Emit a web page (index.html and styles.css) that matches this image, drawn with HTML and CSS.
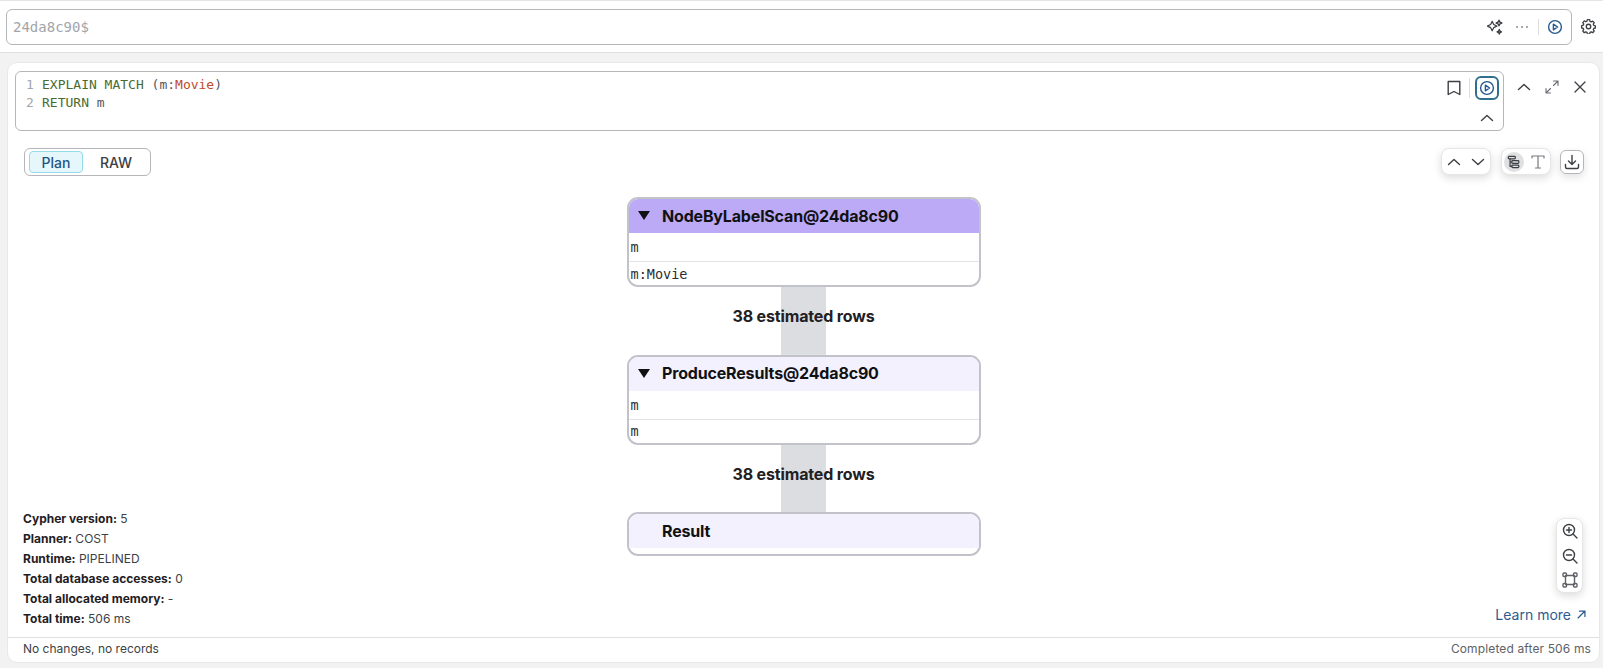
FILE: index.html
```html
<!DOCTYPE html>
<html lang="en">
<head>
<meta charset="utf-8">
<title>Query plan</title>
<link rel="stylesheet" href="styles.css">
</head>
<body>
<header class="topbar">
  <div class="prompt">
    <span class="prompt-text">24da8c90$</span>
    <div class="prompt-actions">
      <svg class="icon" viewBox="0 0 16 16"><path d="M6 4.500l1.800 3.700L11.500 10l-3.700 1.800L6 15.500l-1.800-3.700L.5 10l3.700-1.800z" transform="translate(0 -1.500) scale(.86)"/><path d="M12 1.200l.9 1.900 1.900.9-1.900.9-.9 1.900-.9-1.900-1.900-.9 1.900-.9z"/><path d="M12.300 10.600l.7 1.500 1.500.7-1.500.7-.7 1.500-.7-1.500-1.500-.7 1.500-.7z"/></svg>
      <svg class="icon dots" viewBox="0 0 16 16"><circle cx="3" cy="8" r=".8"/><circle cx="8" cy="8" r=".8"/><circle cx="13" cy="8" r=".8"/></svg>
      <span class="divider"></span>
      <svg class="icon run" viewBox="0 0 16 16"><circle cx="8" cy="8" r="6.400"/><path d="M6.400 5.200l4.200 2.800-4.200 2.800z"/></svg>
    </div>
  </div>
  <svg class="icon gear" viewBox="0 0 16 16"><path d="M6.800 1.200h2.400l.4 1.800 1.300.6 1.600-.9 1.600 1.800-1 1.500.5 1.300 1.700.5v2.300l-1.700.5-.5 1.300 1 1.500-1.600 1.700-1.600-.9-1.300.6-.4 1.800H6.800l-.4-1.800-1.300-.6-1.600.9-1.600-1.700 1-1.500-.5-1.300-1.700-.5V7.600l1.700-.5.5-1.300-1-1.500 1.600-1.800 1.600.9 1.300-.6z" transform="translate(0 -.5)"/><circle cx="8" cy="8" r="2.400"/></svg>
</header>

<main class="page">
  <section class="card">
    <div class="card-head">
      <div class="editor">
        <div class="code">
          <div class="code-line"><span class="ln">1</span><span class="kw">EXPLAIN MATCH</span> (m:<span class="label">Movie</span>)</div>
          <div class="code-line"><span class="ln">2</span><span class="kw">RETURN</span> m</div>
        </div>
        <div class="editor-actions">
          <div class="editor-top">
            <svg class="icon" viewBox="0 0 16 16"><path d="M2.200 1.500h11.600v13L8 11.500l-5.800 3z"/></svg>
            <span class="divider tall"></span>
            <span class="run-box"><svg class="icon run" viewBox="0 0 16 16"><circle cx="8" cy="8" r="6.400"/><path d="M6.400 5.200l4.200 2.800-4.200 2.800z"/></svg></span>
          </div>
          <svg class="icon chev" viewBox="0 0 16 16"><path d="M2.500 10.500L8 5.500l5.500 5"/></svg>
        </div>
      </div>
      <div class="card-actions">
        <svg class="icon chev" viewBox="0 0 16 16"><path d="M2.500 10.500L8 5.500l5.500 5"/></svg>
        <svg class="icon expand" viewBox="0 0 16 16"><path d="M2 14l4.500-4.500M9.500 6.500L14 2M9.500 2H14v4.500M2 9.500V14h4.500"/></svg>
        <svg class="icon close" viewBox="0 0 16 16"><path d="M3 3l10 10M13 3L3 13"/></svg>
      </div>
    </div>

    <div class="canvas">
      <div class="switch">
        <span class="tab tab-on">Plan</span>
        <span class="tab tab-off">RAW</span>
      </div>

      <div class="tools">
        <div class="tool-group">
          <svg class="icon chev" viewBox="0 0 16 16"><path d="M2.500 10.500L8 5.500l5.500 5"/></svg>
          <svg class="icon chev" viewBox="0 0 16 16"><path d="M2.500 5.500L8 10.500l5.500-5"/></svg>
        </div>
        <div class="tool-group tight">
          <span class="tool-on"><svg class="icon small" viewBox="0 0 16 16"><rect x="1.500" y="1.500" width="8" height="3" rx="1"/><rect x="5.500" y="6.500" width="8" height="3" rx="1"/><rect x="5.500" y="11.500" width="8" height="3" rx="1"/><path d="M3.500 4.500V8h2M3.500 8v5h2"/></svg></span>
          <svg class="icon text-icon" viewBox="0 0 16 16"><path d="M2 4V2h12v2M8 2v12M5.500 14h5"/></svg>
        </div>
        <span class="tool-btn"><svg class="icon" viewBox="0 0 16 16"><path d="M8 1.500v8.500M4.500 7L8 10.500 11.500 7M1.500 10.500v2.500a1.500 1.500 0 0 0 1.500 1.500h10a1.500 1.500 0 0 0 1.500-1.500v-2.500"/></svg></span>
      </div>

      <div class="graph">
        <article class="node">
          <div class="node-head head-strong"><span class="caret"></span>NodeByLabelScan@24da8c90</div>
          <div class="node-row first">m</div>
          <div class="node-row">m:Movie</div>
        </article>
        <div class="edge"><span>38 estimated rows</span></div>
        <article class="node">
          <div class="node-head"><span class="caret"></span>ProduceResults@24da8c90</div>
          <div class="node-row first">m</div>
          <div class="node-row">m</div>
        </article>
        <div class="edge"><span>38 estimated rows</span></div>
        <article class="node node-end">
          <div class="node-head"><span class="caret none"></span>Result</div>
        </article>
      </div>

      <dl class="stats">
        <div><dt>Cypher version:</dt> <dd>5</dd></div>
        <div><dt>Planner:</dt> <dd>COST</dd></div>
        <div><dt>Runtime:</dt> <dd>PIPELINED</dd></div>
        <div><dt>Total database accesses:</dt> <dd>0</dd></div>
        <div><dt>Total allocated memory:</dt> <dd>-</dd></div>
        <div><dt>Total time:</dt> <dd>506 ms</dd></div>
      </dl>

      <div class="zoom-tools">
        <svg class="icon" viewBox="0 0 16 16"><circle cx="7" cy="7" r="5.500"/><path d="M11 11l4 4M7 4.500v5M4.500 7h5"/></svg>
        <svg class="icon" viewBox="0 0 16 16"><circle cx="7" cy="7" r="5.500"/><path d="M11 11l4 4M4.500 7h5"/></svg>
        <svg class="icon fit" viewBox="0 0 16 16"><rect x="3.500" y="3.500" width="9" height="9" rx=".5"/><rect x="1" y="1" width="3.500" height="3.500" rx="1"/><rect x="11.500" y="1" width="3.500" height="3.500" rx="1"/><rect x="1" y="11.500" width="3.500" height="3.500" rx="1"/><rect x="11.500" y="11.500" width="3.500" height="3.500" rx="1"/></svg>
      </div>

      <a class="learn" href="#">Learn more <svg class="icon arrow" viewBox="0 0 16 16"><path d="M3 13L13 3M5 3h8v8"/></svg></a>
    </div>

    <footer class="status">
      <span>No changes, no records</span>
      <span class="status-right">Completed after 506 ms</span>
    </footer>
  </section>
</main>
</body>
</html>
```

FILE: styles.css
```css
* { box-sizing: border-box; }

html, body { height: 100%; }

body {
  margin: 0;
  display: flex;
  flex-direction: column;
  background: #f2f2f2;
  color: #1a1b1d;
  font-family: Inter, "Liberation Sans", sans-serif;
  overflow: hidden;
}

.icon {
  width: 16px;
  height: 16px;
  flex: none;
  fill: none;
  stroke: #3c3f44;
  stroke-width: 1.4;
  stroke-linejoin: round;
  stroke-linecap: round;
}

.icon.run { stroke: #24588f; }

.topbar {
  height: 53px;
  flex: none;
  display: flex;
  align-items: flex-start;
  gap: 9px;
  padding: 9px 7px 0 6px;
  background: #fff;
  border-top: 1px solid #e6e6e6;
  border-bottom: 1px solid #e0e0e0;
}

.prompt {
  flex: 1;
  height: 36px;
  margin-top: -1px;
  display: flex;
  align-items: center;
  justify-content: space-between;
  padding: 0 8px 0 6px;
  border: 1px solid #b5b6ba;
  border-radius: 6px;
}

.prompt-text {
  font: 14px "DejaVu Sans Mono", monospace;
  color: #a2a5aa;
}

.prompt-actions {
  display: flex;
  align-items: center;
}

.icon.dots {
  margin-left: 11px;
  fill: #3c3f44;
  stroke: none;
}

.divider {
  width: 1px;
  height: 16px;
  margin: 0 8px;
  background: #dcdde0;
}

.gear {
  width: 15px;
  height: 15px;
  margin-top: 9px;
}

.page {
  flex: 1;
  min-height: 0;
  padding: 9px 3px 5px 7px;
  display: flex;
}

.card {
  flex: 1;
  display: flex;
  flex-direction: column;
  background: #fff;
  border: 1px solid #e8e8e8;
  border-radius: 10px;
}

.card-head {
  display: flex;
  align-items: flex-start;
  padding: 8px 0 0 7px;
}

.editor {
  flex: 1;
  height: 60px;
  display: flex;
  justify-content: space-between;
  border: 1px solid #b5b6ba;
  border-radius: 6px;
  padding: 4px 4px 0 10px;
}

.code {
  font: 13px/18px "DejaVu Sans Mono", monospace;
  color: #55585d;
}

.ln {
  display: inline-block;
  width: 16px;
  color: #a2a5aa;
}

.kw { color: #4a6b2f; }

.label { color: #bd4a2a; }

.editor-actions {
  display: flex;
  flex-direction: column;
  align-items: flex-end;
  gap: 10px;
}

.editor-actions .chev { margin-right: 4px; }

.editor-top {
  display: flex;
  align-items: center;
}

.divider.tall {
  height: 20px;
  margin: 0 5px 0 7px;
}

.run-box {
  width: 24px;
  height: 24px;
  display: flex;
  align-items: center;
  justify-content: center;
  border: 2px solid #2f6f90;
  border-radius: 6px;
}

.card-actions {
  width: 95px;
  flex: none;
  display: flex;
  justify-content: space-between;
  padding: 8px 11px 0 12px;
}

.expand {
  stroke: #6b6e73;
  stroke-width: 1.1;
}

.close { stroke-width: 1.3; }

.canvas {
  flex: 1;
  position: relative;
  min-height: 0;
}

.switch {
  position: absolute;
  left: 16px;
  top: 17px;
  width: 127px;
  height: 28px;
  display: flex;
  align-items: center;
  padding: 0 4px;
  border: 1px solid #b5b6ba;
  border-radius: 6px;
  font-size: 14px;
  font-weight: 500;
}

.tab {
  flex: 1;
  height: 22px;
  display: flex;
  align-items: center;
  justify-content: center;
  color: #3c3f44;
  border: 1px solid transparent;
  border-radius: 4px;
}

.tab-off { padding-left: 3px; }

.tab-on {
  flex: none;
  width: 54px;
  background: #e5f7fb;
  border-color: #93dbe8;
  color: #1f5488;
}

.tools {
  position: absolute;
  right: 15px;
  top: 17px;
  display: flex;
  align-items: center;
  gap: 10px;
}

.tool-group {
  width: 50px;
  height: 27px;
  display: flex;
  align-items: center;
  justify-content: space-between;
  padding: 0 4px;
  background: #fff;
  border: 1px solid #e6e6e6;
  border-radius: 8px;
  box-shadow: 0 3px 9px rgba(0, 0, 0, .14);
}

.tool-group.tight { padding: 0 4px 0 2px; }

.tool-on {
  width: 20px;
  height: 20px;
  display: flex;
  align-items: center;
  justify-content: center;
  background: #dfe0e2;
  border-radius: 50%;
}

.icon.small { width: 14px; height: 14px; }

.text-icon { stroke: #77797e; stroke-width: 1.2; }

.tool-btn {
  width: 24px;
  height: 24px;
  margin-left: -1px;
  display: flex;
  align-items: center;
  justify-content: center;
  border: 1px solid #b5b6ba;
  border-radius: 6px;
  box-shadow: 0 3px 8px rgba(0, 0, 0, .12);
}

.graph {
  display: flex;
  flex-direction: column;
  align-items: center;
  padding-top: 66px;
}

.node {
  width: 354px;
  flex: none;
  background: #fff;
  border: 2px solid #c2c2cb;
  border-radius: 11px;
  overflow: hidden;
}

.node-end { height: 44px; }

.node-head {
  height: 34px;
  display: flex;
  align-items: center;
  padding: 0 0 1px 9px;
  background: #f4f1ff;
  font-size: 16px;
  font-weight: 700;
  letter-spacing: -.17px;
  color: #101113;
}

.head-strong { background: #bdaaf7; }

.caret {
  width: 0;
  height: 0;
  margin-right: 12.5px;
  border-left: 6.5px solid transparent;
  border-right: 6.5px solid transparent;
  border-top: 9px solid #101113;
}

.caret.none { border-top-color: transparent; }

.node-row {
  height: 23px;
  padding-left: 2px;
  display: flex;
  align-items: center;
  font: 13.5px "DejaVu Sans Mono", monospace;
  color: #2c2e32;
}

.node-row.first {
  height: 29px;
  border-bottom: 1px solid #e3e3e6;
}

.edge {
  width: 100%;
  height: 67.7px;
  display: flex;
  align-items: center;
  justify-content: center;
  padding-bottom: 9px;
  background: linear-gradient(#dcdde0, #dcdde0) center / 45px 100% no-repeat;
  font-size: 16px;
  font-weight: 700;
  letter-spacing: -.15px;
  color: #1f2023;
}

.stats {
  position: absolute;
  left: 15px;
  bottom: 8px;
  margin: 0;
  font-size: 12px;
  line-height: 20px;
  color: #1f2023;
}

.stats dt,
.stats dd {
  display: inline;
  margin: 0;
}

.stats dt { font-weight: 700; }

.stats dd { color: #3c3f44; }

.zoom-tools {
  position: absolute;
  right: 16px;
  bottom: 44px;
  width: 27px;
  height: 75px;
  display: flex;
  flex-direction: column;
  align-items: center;
  justify-content: space-between;
  padding: 4px 0;
  background: #fff;
  border: 1px solid #e6e6e6;
  border-radius: 8px;
  box-shadow: 0 3px 9px rgba(0, 0, 0, .14);
}

.fit { stroke: #5e6166; }

.learn {
  position: absolute;
  right: 12px;
  bottom: 14px;
  display: flex;
  align-items: center;
  gap: 5px;
  font-size: 14px;
  color: #2d5c8f;
  text-decoration: none;
}

.arrow {
  width: 11px;
  height: 11px;
  stroke: #2d5c8f;
  stroke-width: 1.8;
}

.status {
  height: 25px;
  flex: none;
  display: flex;
  align-items: center;
  justify-content: space-between;
  padding: 0 8px 4px 15px;
  border-top: 1px solid #e0e0e0;
  font-size: 12px;
  color: #3c3f44;
}

.status-right {
  color: #5e6166;
  letter-spacing: .13px;
}
```
